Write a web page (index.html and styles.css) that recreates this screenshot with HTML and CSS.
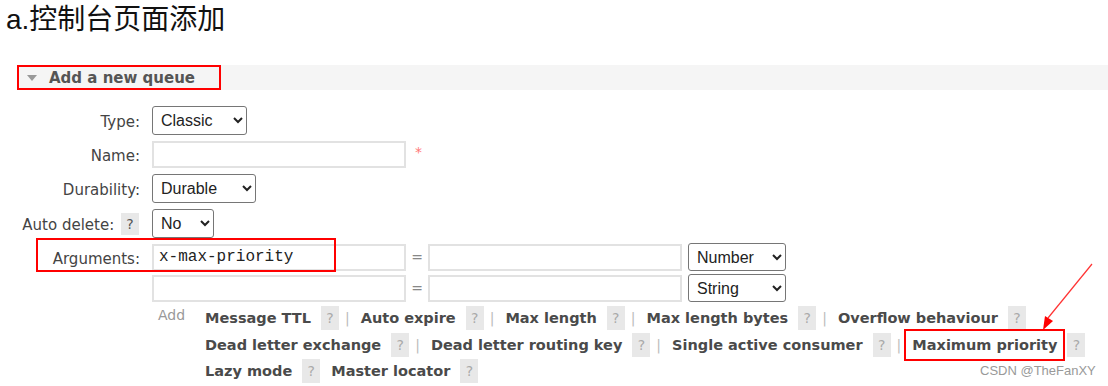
FILE: index.html
```html
<!DOCTYPE html>
<html lang="zh-CN">
<head>
    <meta charset="UTF-8">
    <title>控制台页面添加</title>
    <link rel="stylesheet" href="styles.css">
</head>
<body>

<h1 class="title">a.控制台页面添加</h1>

<div class="section-head">
    <h2 class="mark-box"><span class="toggle"></span>Add a new queue</h2>
</div>

<form class="queue-form">
    <div class="row">
        <label class="label">Type:</label>
        <select class="sel sel-type"><option>Classic</option></select>
    </div>
    <div class="row">
        <label class="label">Name:</label>
        <input type="text" class="txt">
        <span class="req">*</span>
    </div>
    <div class="row">
        <label class="label">Durability:</label>
        <select class="sel sel-dur"><option>Durable</option></select>
    </div>
    <div class="row row-auto">
        <label class="label">Auto delete: <span class="help help-dark">?</span></label>
        <select class="sel sel-no"><option>No</option></select>
    </div>
    <div class="row row-args">
        <label class="label">Arguments:</label>
        <input type="text" class="txt mono" value="x-max-priority">
        <span class="eq">=</span>
        <input type="text" class="txt">
        <select class="sel sel-kind"><option>Number</option></select>
    </div>
    <div class="row row-args">
        <span class="label"></span>
        <input type="text" class="txt">
        <span class="eq">=</span>
        <input type="text" class="txt">
        <select class="sel sel-kind"><option>String</option></select>
    </div>

    <div class="add-row">
        <span class="add">Add</span>
        <div class="arg-links">
            <div class="line">
                <span class="arg">Message TTL</span><span class="help">?</span><span class="sep">|</span>
                <span class="arg">Auto expire</span><span class="help">?</span><span class="sep">|</span>
                <span class="arg">Max length</span><span class="help">?</span><span class="sep">|</span>
                <span class="arg">Max length bytes</span><span class="help">?</span><span class="sep">|</span>
                <span class="arg">Overflow behaviour</span><span class="help">?</span>
            </div>
            <div class="line">
                <span class="arg">Dead letter exchange</span><span class="help">?</span><span class="sep">|</span>
                <span class="arg">Dead letter routing key</span><span class="help">?</span><span class="sep">|</span>
                <span class="arg">Single active consumer</span><span class="help">?</span><span class="sep">|</span>
                <span class="arg mark-box">Maximum priority</span><span class="help">?</span>
            </div>
            <div class="line">
                <span class="arg">Lazy mode</span><span class="help help-gap">?</span>
                <span class="arg">Master locator</span><span class="help">?</span>
            </div>
        </div>
    </div>
</form>

<!-- annotations drawn over the screenshot -->
<div class="args-box"></div>
<svg class="arrow" width="80" height="80" viewBox="0 0 80 80">
    <line x1="72" y1="2" x2="28" y2="56" stroke="#f33" stroke-width="1.2"/>
    <polygon points="23,68 25,54 33,59" fill="#f00"/>
</svg>
<div class="watermark">CSDN @TheFanXY</div>

</body>
</html>
```

FILE: styles.css
```css
body {
    margin: 0;
    font-family: "DejaVu Sans", Verdana, sans-serif;
    color: #444;
    background: #fff;
    position: relative;
    width: 1108px;
    height: 386px;
    overflow: hidden;
}

.title {
    margin: 0;
    padding: 2px 0 0 6px;
    font-family: "Liberation Sans", "Noto Sans CJK SC", sans-serif;
    font-size: 28px;
    font-weight: normal;
    line-height: 36px;
    color: #111;
}

.section-head {
    margin: 27px 0 0 17px;
    height: 25px;
    background: #f5f5f5;
}

.section-head h2 {
    display: inline-flex;
    align-items: center;
    margin: 2px 0 0 2px;
    height: 21px;
    width: 200px;
    padding-left: 8px;
    box-sizing: border-box;
    font-size: 15px;
    font-weight: bold;
    color: #555;
}

.toggle {
    width: 0;
    height: 0;
    border-left: 5px solid transparent;
    border-right: 5px solid transparent;
    border-top: 6px solid #999;
    margin-right: 12px;
}

.mark-box {
    outline: 2px solid #f00;
    outline-offset: 0;
}

.queue-form {
    margin-top: 16px;
}

.row {
    display: flex;
    align-items: center;
    margin-bottom: 6px;
}

.label {
    width: 140px;
    flex: none;
    text-align: right;
    font-size: 15px;
    color: #444;
    margin-right: 12px;
    padding-top: 3px;
}

.sel {
    height: 29px;
    box-sizing: border-box;
    border: 1px solid #767676;
    border-radius: 3px;
    background: #fff;
    font-family: "Liberation Sans", Arial, sans-serif;
    font-size: 16px;
    color: #222;
    padding-left: 4px;
}

.sel-type { width: 95px; }
.sel-dur { width: 104px; }
.sel-no { width: 62px; }
.sel-kind { width: 98px; height: 28px; margin-left: 6px; }

.txt {
    width: 254px;
    height: 27px;
    box-sizing: border-box;
    border: 2px solid #e2e2e2;
    padding: 0 5px;
    font-size: 14px;
    outline: none;
}

.mono {
    font-family: "Liberation Mono", "Courier New", monospace;
    font-size: 16px;
    color: #222;
}

.req {
    color: #f77;
    font-size: 14px;
    margin-left: 9px;
    margin-top: -6px;
}

.eq {
    width: 22px;
    text-align: center;
    color: #888;
    font-size: 14px;
}

.row-auto { margin-bottom: 5px; }
.row-args { margin-bottom: 3px; }

.help {
    display: inline-block;
    width: 18px;
    height: 24px;
    line-height: 24px;
    text-align: center;
    background: #e8e8e8;
    color: #aaa;
    font-size: 14px;
    font-weight: normal;
    margin: 0 6px 0 10px;
}

.help-gap { margin-right: 11px; }

.help-dark {
    color: #555;
    margin: -3px 1px 0 2px;
    height: 22px;
    line-height: 22px;
    vertical-align: middle;
}

.add-row {
    display: flex;
    padding-left: 158px;
    margin-top: 2px;
}

.add {
    color: #999;
    font-size: 14px;
    width: 47px;
    line-height: 20px;
}

.arg-links .line {
    display: flex;
    align-items: center;
    height: 26.5px;
    white-space: nowrap;
}

.arg {
    font-size: 14.5px;
    font-weight: bold;
    color: #4a4a4a;
}

.sep {
    color: #bbb;
    font-size: 14px;
    margin-right: 11px;
}

.arg.mark-box {
    outline-offset: 6px;
}

.args-box {
    position: absolute;
    left: 36px;
    top: 238px;
    width: 296px;
    height: 30px;
    border: 2px solid #f00;
}

.arrow {
    position: absolute;
    left: 1020px;
    top: 262px;
}

.watermark {
    position: absolute;
    left: 980px;
    top: 363px;
    font-family: "Liberation Sans", Arial, sans-serif;
    font-size: 13px;
    color: #999;
}
```
